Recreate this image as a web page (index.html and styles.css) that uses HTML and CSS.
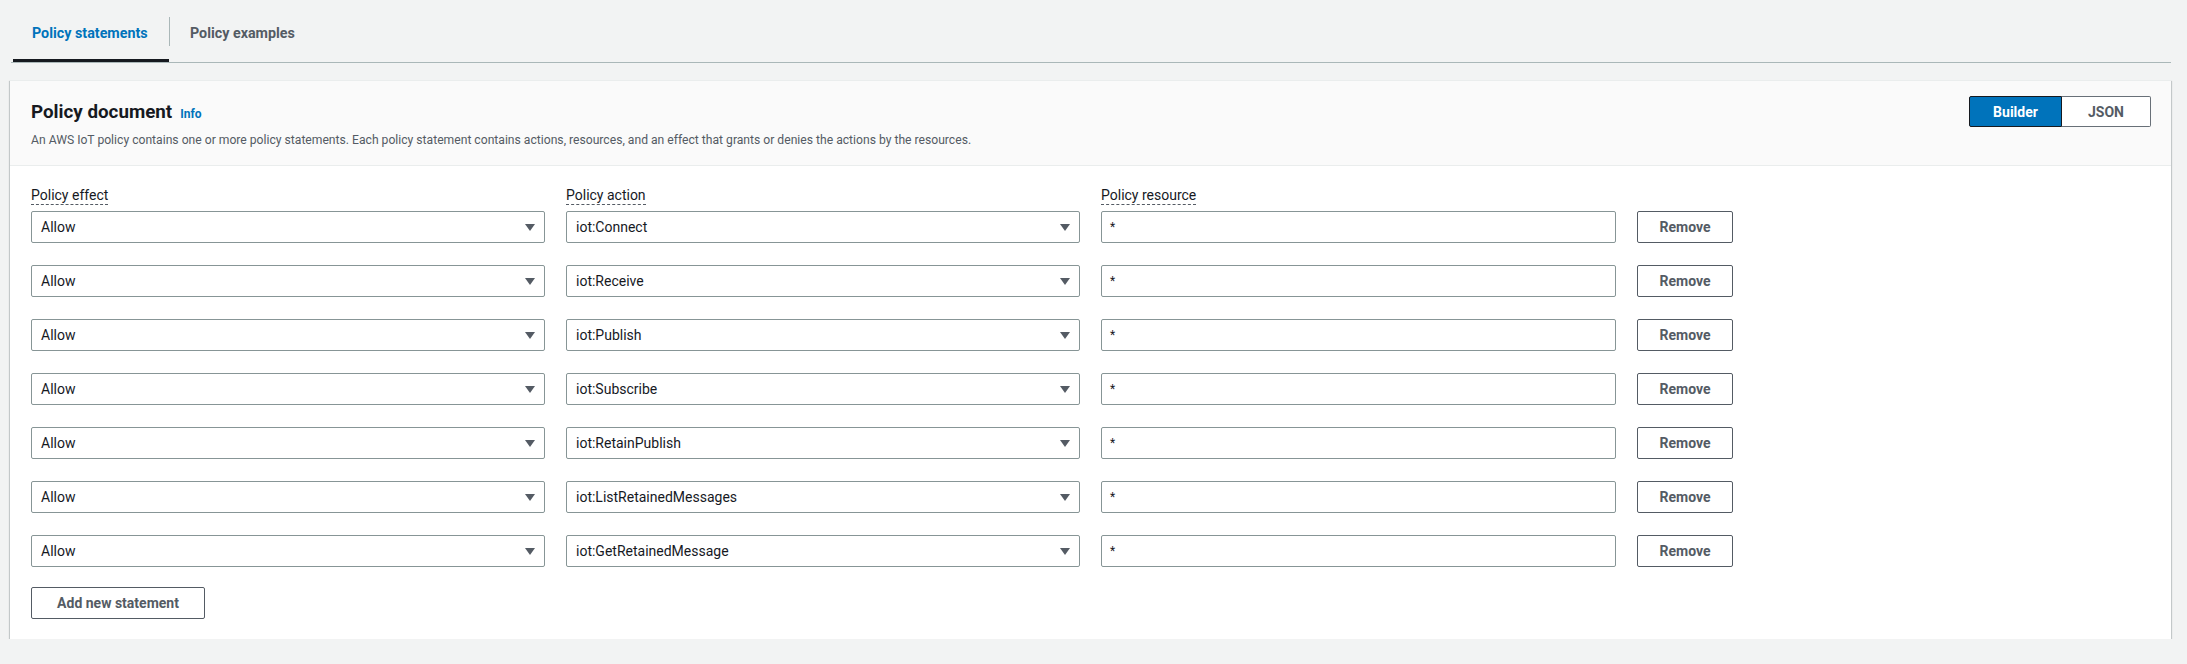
FILE: index.html
```html
<!DOCTYPE html>
<html lang="en">
<head>
<meta charset="utf-8">
<title>Policy document</title>
<link rel="stylesheet" href="styles.css">
</head>
<body>
<div class="page">
  <div class="tabs">
    <div class="tab tab-active">Policy statements</div>
    <span class="tab-sep"></span>
    <div class="tab">Policy examples</div>
  </div>

  <div class="panel">
    <div class="panel-header">
      <div class="header-text">
        <div class="title-row">
          <h2 class="title">Policy document</h2>
          <a class="info">Info</a>
        </div>
        <p class="desc">An AWS IoT policy contains one or more policy statements. Each policy statement contains actions, resources, and an effect that grants or denies the actions by the resources.</p>
      </div>
      <div class="seg">
        <button class="seg-btn seg-on">Builder</button>
        <button class="seg-btn">JSON</button>
      </div>
    </div>

    <div class="panel-body">
      <div class="grid labels">
        <div><span class="label">Policy effect</span></div>
        <div><span class="label">Policy action</span></div>
        <div><span class="label">Policy resource</span></div>
        <div></div>
      </div>
      <div class="rows">
        <div class="grid row">
          <div class="select"><span>Allow</span><i class="caret"></i></div>
          <div class="select"><span>iot:Connect</span><i class="caret"></i></div>
          <div class="input">*</div>
          <button class="btn">Remove</button>
        </div>
        <div class="grid row">
          <div class="select"><span>Allow</span><i class="caret"></i></div>
          <div class="select"><span>iot:Receive</span><i class="caret"></i></div>
          <div class="input">*</div>
          <button class="btn">Remove</button>
        </div>
        <div class="grid row">
          <div class="select"><span>Allow</span><i class="caret"></i></div>
          <div class="select"><span>iot:Publish</span><i class="caret"></i></div>
          <div class="input">*</div>
          <button class="btn">Remove</button>
        </div>
        <div class="grid row">
          <div class="select"><span>Allow</span><i class="caret"></i></div>
          <div class="select"><span>iot:Subscribe</span><i class="caret"></i></div>
          <div class="input">*</div>
          <button class="btn">Remove</button>
        </div>
        <div class="grid row">
          <div class="select"><span>Allow</span><i class="caret"></i></div>
          <div class="select"><span>iot:RetainPublish</span><i class="caret"></i></div>
          <div class="input">*</div>
          <button class="btn">Remove</button>
        </div>
        <div class="grid row">
          <div class="select"><span>Allow</span><i class="caret"></i></div>
          <div class="select"><span>iot:ListRetainedMessages</span><i class="caret"></i></div>
          <div class="input">*</div>
          <button class="btn">Remove</button>
        </div>
        <div class="grid row">
          <div class="select"><span>Allow</span><i class="caret"></i></div>
          <div class="select"><span>iot:GetRetainedMessage</span><i class="caret"></i></div>
          <div class="input">*</div>
          <button class="btn">Remove</button>
        </div>
      </div>
      <button class="btn btn-add">Add new statement</button>
    </div>
  </div>
</div>
</body>
</html>
```

FILE: styles.css
```css
* { box-sizing: border-box; }

html, body {
  margin: 0;
  padding: 0;
  background: #f2f3f3;
  font-family: Roboto, "Noto Sans", "Liberation Sans", sans-serif;
  color: #16191f;
}

.page {
  padding: 6px 16px 0 10px;
}

.tabs {
  display: flex;
  align-items: stretch;
  margin-left: 1px;
  border-bottom: 1px solid #aab7b8;
  padding-left: 2px;
  height: 57px;
}

.tab {
  display: flex;
  align-items: center;
  padding: 0 20px 0 19px;
  font-size: 14.3px;
  font-weight: 700;
  color: #545b64;
  border-bottom: 3px solid transparent;
  padding-top: 1px;
}

.tab-active {
  color: #0073bb;
  border-bottom-color: #16191f;
  width: 156px;
}

.tab-sep {
  align-self: center;
  width: 1px;
  height: 29px;
  background: #aab7b8;
  margin-top: -6px;
}

.tab-sep + .tab {
  padding-left: 20px;
}

.panel {
  margin-top: 17px;
  background: #ffffff;
  box-shadow: 0 1px 1px 0 rgba(0, 28, 36, 0.3), 1px 1px 1px 0 rgba(0, 28, 36, 0.15), -1px 1px 1px 0 rgba(0, 28, 36, 0.15);
  border-top: 1px solid #eaeded;
}

.panel-header {
  display: flex;
  justify-content: space-between;
  align-items: flex-start;
  background: #fafafa;
  border-bottom: 1px solid #eaeded;
  padding: 19px 20px 17px 21px;
}

.title-row {
  display: flex;
  align-items: baseline;
  gap: 8px;
}

.title {
  margin: 0;
  font-size: 18.8px;
  line-height: 24px;
  font-weight: 700;
  color: #16191f;
}

.info {
  font-size: 12px;
  font-weight: 700;
  color: #0073bb;
}

.desc {
  margin: 8px 0 0;
  font-size: 12.15px;
  line-height: 16px;
  color: #545b64;
}

.seg {
  display: flex;
  margin-top: -4px;
}

.seg-btn {
  height: 31px;
  font-family: inherit;
  font-size: 14px;
  font-weight: 700;
  border: 1px solid #687078;
  border-radius: 2px;
  background: #ffffff;
  color: #545b64;
  padding: 0;
}

.seg-on {
  width: 93px;
  background: #0073bb;
  border-color: #16191f;
  color: #ffffff;
  border-top-right-radius: 0;
  border-bottom-right-radius: 0;
}

.seg-on + .seg-btn {
  width: 89px;
  border-left: none;
  border-top-left-radius: 0;
  border-bottom-left-radius: 0;
}

.panel-body {
  padding: 19px 20px 20px 21px;
}

.grid {
  display: grid;
  grid-template-columns: 514px 514px 515px 96px;
  column-gap: 21px;
}

.labels {
  margin-bottom: 6px;
}

.label {
  font-size: 14px;
  line-height: 18px;
  border-bottom: 1px dashed #545b64;
  display: inline-block;
  color: #16191f;
}

.rows {
  display: flex;
  flex-direction: column;
  gap: 22px;
}

.select, .input {
  height: 32px;
  border: 1px solid #879596;
  border-radius: 2px;
  background: #ffffff;
  font-size: 14px;
  display: flex;
  align-items: center;
  padding: 0 9px;
  color: #16191f;
}

.select {
  justify-content: space-between;
}

.caret {
  width: 0;
  height: 0;
  border-left: 5.5px solid transparent;
  border-right: 5.5px solid transparent;
  border-top: 7px solid #545b64;
  margin-right: 0;
}

.input {
  padding-left: 8px;
  font-size: 12px;
}

.btn {
  height: 32px;
  font-family: inherit;
  font-size: 14px;
  font-weight: 700;
  color: #545b64;
  background: #ffffff;
  border: 1px solid #545b64;
  border-radius: 2px;
  padding: 0;
}

.btn-add {
  margin-top: 20px;
  width: 174px;
}
```
